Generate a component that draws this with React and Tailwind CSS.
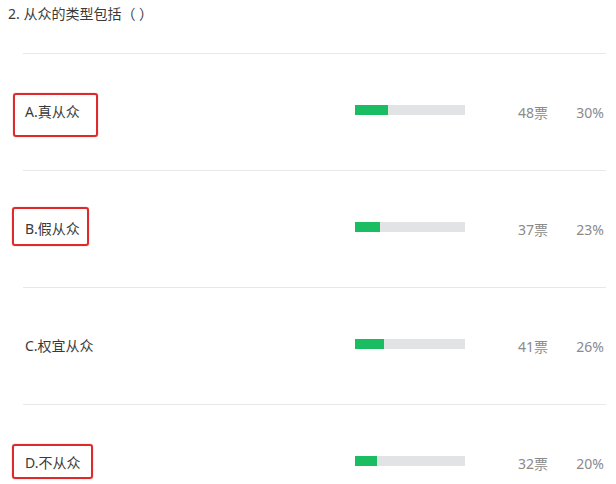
const OPTIONS = [
  { label: 'A.真从众', votes: 48, pct: 30, box: 'left-[-12px] right-[-18px] top-[-9px] bottom-[-15px]' },
  { label: 'B.假从众', votes: 37, pct: 23, box: 'left-[-13px] right-[-9px] top-[-12px] bottom-[-7px]' },
  { label: 'C.权宜从众', votes: 41, pct: 26 },
  { label: 'D.不从众', votes: 32, pct: 20, box: 'left-[-13px] right-[-13px] top-[-9px] bottom-[-6px]' },
]

function OptionRow({ option }) {
  return (
    <div className="flex h-[117px] items-center border-t border-[#e8e8e8] px-[2px]">
      {/* Label, some are circled in red */}
      <div className="flex-1">
        <span className="relative inline-block mb-[1px] leading-[20px] text-[#3a3a3a]">
          {option.label}
          {option.box && (
            <span
              className={`absolute ${option.box} rounded-[3px] border-[2.5px] border-[#de2a2a] shadow-[0_0_1px_#e05050]`}
            />
          )}
        </span>
      </div>

      {/* Bar */}
      <div className="mb-[5px] h-[10px] w-[110px] bg-[#e1e3e4]">
        <div className="h-full bg-[#1bbd62]" style={{ width: `${option.pct}%` }} />
      </div>

      <div className="w-[83px] text-right text-[#8a8a8a]">{option.votes}票</div>
      <div className="w-[56px] text-right text-[#8a8a8a]">{option.pct}%</div>
    </div>
  )
}

export default function App() {
  return (
    <div
      className="h-[484px] w-[616px] overflow-hidden bg-white text-[14px]"
      style={{ fontFamily: '"Noto Sans", "Noto Sans CJK SC", sans-serif' }}
    >
      <div className="h-[53px] pl-[8px] pt-[4px] leading-[20px] text-[#3a3a3a]">2. 从众的类型包括（ ）</div>

      <div className="pl-[23px] pr-[10px]">
        {OPTIONS.map((opt) => (
          <OptionRow key={opt.label} option={opt} />
        ))}
      </div>
    </div>
  )
}
